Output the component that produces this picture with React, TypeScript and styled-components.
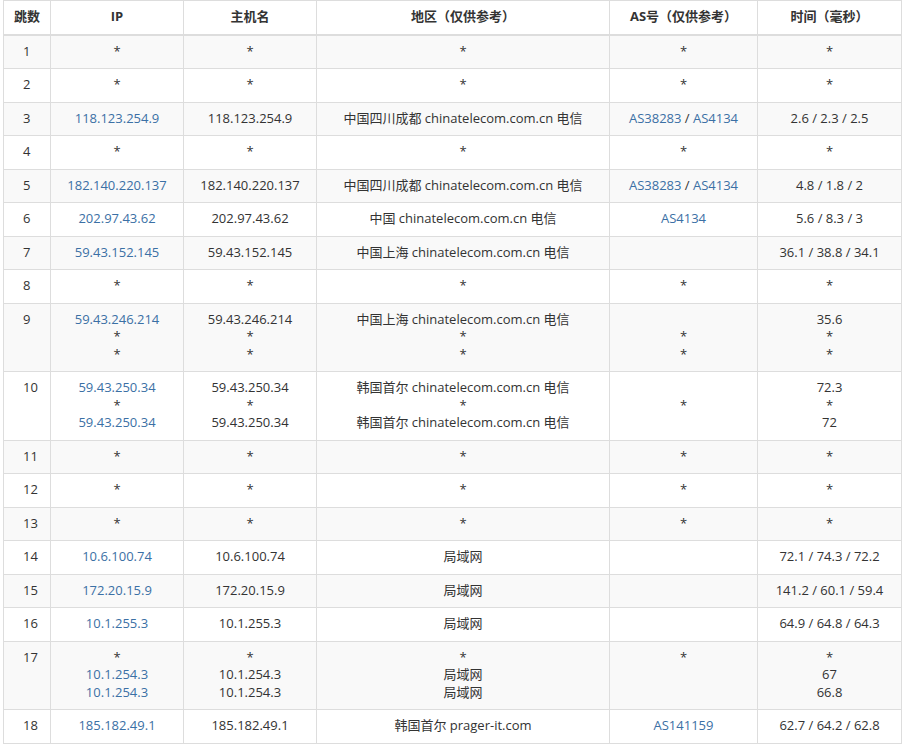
import React from "react";
import styled, { createGlobalStyle } from "styled-components";

const Global = createGlobalStyle`
  body { margin: 0; padding: 0 3px; background: #fff; }
`;

const Table = styled.table`
  border-collapse: collapse;
  width: 898px;
  table-layout: fixed;
  font-family: "Open Sans", "Noto Sans CJK SC", sans-serif;
  font-size: 13px;
  line-height: 17.5px;
  color: #333;
`;

const Th = styled.th`
  border: 1px solid #ddd;
  border-bottom: 2px solid #ddd;
  padding: 7px 8px 8px;
  font-weight: bold;
  text-align: center;
`;

const Row = styled.tr<{ $odd: boolean }>`
  background: ${(p) => (p.$odd ? "#f9f9f9" : "#fff")};
`;

const Td = styled.td`
  border: 1px solid #ddd;
  padding: 7px 8px 8px;
  text-align: center;
  vertical-align: middle;
  white-space: nowrap;
`;

const HopTd = styled(Td)`
  text-align: left;
  padding-left: 19px;
  vertical-align: top;
`;

const Line = styled.div`
  height: 17.5px;
`;

const Link = styled.span`
  color: #3b70a5;
`;

type R = { hop: string; ip: string[]; host: string[]; loc: string[]; as: string[]; t: string[] };

const s = ["*"];
const star = (hop: string): R => ({ hop, ip: s, host: s, loc: s, as: s, t: s });

const rows: R[] = [
  star("1"),
  star("2"),
  { hop: "3", ip: ["118.123.254.9"], host: ["118.123.254.9"], loc: ["中国四川成都 chinatelecom.com.cn 电信"], as: ["AS38283|AS4134"], t: ["2.6 / 2.3 / 2.5"] },
  star("4"),
  { hop: "5", ip: ["182.140.220.137"], host: ["182.140.220.137"], loc: ["中国四川成都 chinatelecom.com.cn 电信"], as: ["AS38283|AS4134"], t: ["4.8 / 1.8 / 2"] },
  { hop: "6", ip: ["202.97.43.62"], host: ["202.97.43.62"], loc: ["中国 chinatelecom.com.cn 电信"], as: ["AS4134"], t: ["5.6 / 8.3 / 3"] },
  { hop: "7", ip: ["59.43.152.145"], host: ["59.43.152.145"], loc: ["中国上海 chinatelecom.com.cn 电信"], as: [""], t: ["36.1 / 38.8 / 34.1"] },
  star("8"),
  { hop: "9", ip: ["59.43.246.214", "*", "*"], host: ["59.43.246.214", "*", "*"], loc: ["中国上海 chinatelecom.com.cn 电信", "*", "*"], as: ["", "*", "*"], t: ["35.6", "*", "*"] },
  { hop: "10", ip: ["59.43.250.34", "*", "59.43.250.34"], host: ["59.43.250.34", "*", "59.43.250.34"], loc: ["韩国首尔 chinatelecom.com.cn 电信", "*", "韩国首尔 chinatelecom.com.cn 电信"], as: ["*"], t: ["72.3", "*", "72"] },
  star("11"),
  star("12"),
  star("13"),
  { hop: "14", ip: ["10.6.100.74"], host: ["10.6.100.74"], loc: ["局域网"], as: [""], t: ["72.1 / 74.3 / 72.2"] },
  { hop: "15", ip: ["172.20.15.9"], host: ["172.20.15.9"], loc: ["局域网"], as: [""], t: ["141.2 / 60.1 / 59.4"] },
  { hop: "16", ip: ["10.1.255.3"], host: ["10.1.255.3"], loc: ["局域网"], as: [""], t: ["64.9 / 64.8 / 64.3"] },
  { hop: "17", ip: ["*", "10.1.254.3", "10.1.254.3"], host: ["*", "10.1.254.3", "10.1.254.3"], loc: ["*", "局域网", "局域网"], as: ["*", "", ""], t: ["*", "67", "66.8"] },
  { hop: "18", ip: ["185.182.49.1"], host: ["185.182.49.1"], loc: ["韩国首尔 prager-it.com"], as: ["AS141159"], t: ["62.7 / 64.2 / 62.8"] },
];

const ipLine = (v: string) => (v === "*" || v === "" ? v : <Link>{v}</Link>);
const asLine = (v: string) => {
  if (v === "*" || v === "") return v;
  const parts = v.split("|");
  return parts.map((p, i) => (
    <React.Fragment key={i}>
      {i > 0 && " / "}
      <Link>{p}</Link>
    </React.Fragment>
  ));
};

const Lines = ({ vals, fmt }: { vals: string[]; fmt?: (v: string) => React.ReactNode }) => (
  <>
    {vals.map((v, i) => (
      <Line key={i}>{fmt ? fmt(v) : v}</Line>
    ))}
  </>
);

export default function App() {
  return (
    <>
      <Global />
      <Table>
        <colgroup>
          <col style={{ width: 47 }} />
          <col style={{ width: 133 }} />
          <col style={{ width: 133 }} />
          <col style={{ width: 293 }} />
          <col style={{ width: 148 }} />
          <col style={{ width: 144 }} />
        </colgroup>
        <thead>
          <tr>
            <Th>跳数</Th>
            <Th>IP</Th>
            <Th>主机名</Th>
            <Th>地区（仅供参考）</Th>
            <Th>AS号（仅供参考）</Th>
            <Th>时间（毫秒）</Th>
          </tr>
        </thead>
        <tbody>
          {rows.map((r, i) => (
            <Row key={r.hop} $odd={i % 2 === 0}>
              <HopTd>{r.hop}</HopTd>
              <Td><Lines vals={r.ip} fmt={ipLine} /></Td>
              <Td><Lines vals={r.host} /></Td>
              <Td><Lines vals={r.loc} /></Td>
              <Td><Lines vals={r.as} fmt={asLine} /></Td>
              <Td><Lines vals={r.t} /></Td>
            </Row>
          ))}
        </tbody>
      </Table>
    </>
  );
}
